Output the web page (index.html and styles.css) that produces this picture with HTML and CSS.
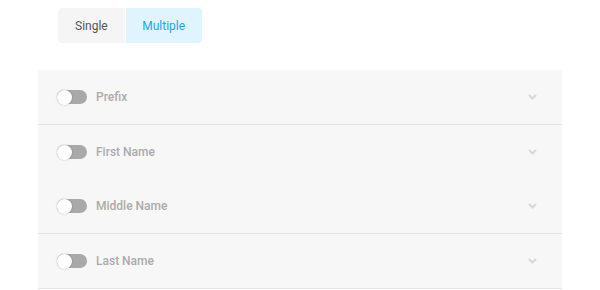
FILE: index.html
```html
<!DOCTYPE html>
<html lang="en">
<head>
  <meta charset="UTF-8">
  <meta name="viewport" content="width=device-width, initial-scale=1.0">
  <title>Name Fields</title>
  <link rel="stylesheet" href="styles.css">
</head>
<body>

<div class="container">
  <div class="tabs">
    <button class="tab">Single</button>
    <button class="tab active">Multiple</button>
  </div>

  <div class="fields">
    <div class="field has-border">
      <span class="toggle"></span>
      <span class="label">Prefix</span>
      <svg class="chevron" viewBox="0 0 9 6"><path d="M1 1l3.5 3.5L8 1" fill="none" stroke="#d8d8d8" stroke-width="2"/></svg>
    </div>
    <div class="field">
      <span class="toggle"></span>
      <span class="label">First Name</span>
      <svg class="chevron" viewBox="0 0 9 6"><path d="M1 1l3.5 3.5L8 1" fill="none" stroke="#d8d8d8" stroke-width="2"/></svg>
    </div>
    <div class="field has-border">
      <span class="toggle"></span>
      <span class="label">Middle Name</span>
      <svg class="chevron" viewBox="0 0 9 6"><path d="M1 1l3.5 3.5L8 1" fill="none" stroke="#d8d8d8" stroke-width="2"/></svg>
    </div>
    <div class="field has-border">
      <span class="toggle"></span>
      <span class="label">Last Name</span>
      <svg class="chevron" viewBox="0 0 9 6"><path d="M1 1l3.5 3.5L8 1" fill="none" stroke="#d8d8d8" stroke-width="2"/></svg>
    </div>
  </div>
</div>

</body>
</html>
```

FILE: styles.css
```css
body {
  font-family: Roboto, Arial, sans-serif;
  background-color: #fff;
  margin: 0;
  padding: 0;
}

.container {
  padding: 8px 38px 0;
}

.tabs {
  display: flex;
  gap: 1px;
  margin-left: 20px;
}

.tab {
  font-family: inherit;
  font-size: 12px;
  height: 35px;
  padding: 0 17px;
  border: none;
  background-color: #f5f5f5;
  color: #555;
  cursor: pointer;
}

.tab:first-child {
  border-radius: 4px 0 0 4px;
}

.tab:last-child {
  border-radius: 0 4px 4px 0;
  width: 76px;
  padding: 0;
}

.tab.active {
  background-color: #e0f4fd;
  color: #1ea7ea;
}

.fields {
  margin-top: 27px;
  background-color: #f7f7f7;
}

.field {
  display: flex;
  align-items: center;
  height: 54px;
  padding: 0 25px 0 19px;
}

.field.has-border {
  border-bottom: 1px solid #e3e3e3;
}

.toggle {
  position: relative;
  width: 30px;
  height: 14px;
  border-radius: 7px;
  background-color: #a9a9a9;
  margin-right: 9px;
}

.toggle::before {
  content: "";
  position: absolute;
  left: 0;
  top: -0.5px;
  width: 15px;
  height: 15px;
  border-radius: 50%;
  background-color: #fff;
  box-shadow: 0 0 2px rgba(0, 0, 0, 0.25);
}

.label {
  flex: 1;
  font-size: 12px;
  font-weight: 500;
  color: #ababab;
}

.chevron {
  display: block;
  width: 9px;
  height: 6px;
}
```
